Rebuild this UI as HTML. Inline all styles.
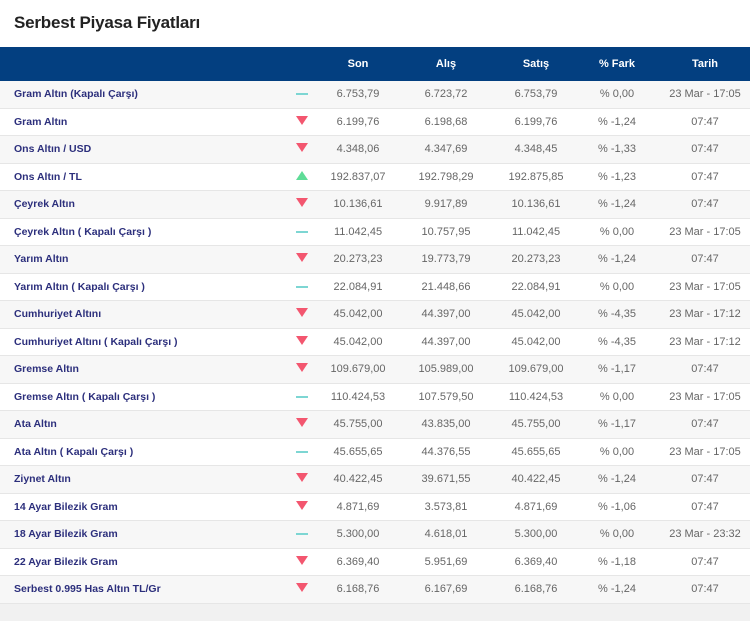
<!DOCTYPE html>
<html><head><meta charset="utf-8"><style>
body{margin:0;width:750px;height:621px;background:#f1f1f1;font-family:"Liberation Sans",sans-serif;overflow:hidden}
.top{background:#fff;height:47px;position:relative}
h1{margin:0;position:absolute;left:14px;top:13px;font-size:17px;font-weight:bold;color:#222;letter-spacing:-0.2px}
table{border-collapse:collapse;width:750px;table-layout:fixed}
th{background:#033f80;color:#fff;font-size:11px;font-weight:bold;height:34px;padding:0;text-align:center}
td{height:26.5px;padding:0;font-size:11px;color:#666;text-align:center;border-bottom:1px solid #e6e6e6;background:#fff}
tr:nth-child(even) td{background:#f7f7f7}
td.n{text-align:left;padding-left:14px;color:#2c2f7c;font-weight:bold;font-size:10.5px}
.d{display:inline-block;width:0;height:0;border-left:6px solid transparent;border-right:6px solid transparent;border-top:9px solid #f3566f}
.u{display:inline-block;width:0;height:0;border-left:6px solid transparent;border-right:6px solid transparent;border-bottom:9px solid #5fdc97}
.e{display:inline-block;width:12px;height:2px;background:#7dd6d3;vertical-align:middle}
</style></head><body>
<div class="top"><h1>Serbest Piyasa Fiyatları</h1></div>
<table>
<colgroup><col style="width:282px"><col style="width:40px"><col style="width:72px"><col style="width:104px"><col style="width:76px"><col style="width:86px"><col style="width:90px"></colgroup>
<tr><th></th><th></th><th>Son</th><th>Alış</th><th>Satış</th><th>% Fark</th><th>Tarih</th></tr>
<tr><td class="n">Gram Altın (Kapalı Çarşı)</td><td><span class="e"></span></td><td>6.753,79</td><td>6.723,72</td><td>6.753,79</td><td>% 0,00</td><td>23 Mar - 17:05</td></tr>
<tr><td class="n">Gram Altın</td><td><span class="d"></span></td><td>6.199,76</td><td>6.198,68</td><td>6.199,76</td><td>% -1,24</td><td>07:47</td></tr>
<tr><td class="n">Ons Altın / USD</td><td><span class="d"></span></td><td>4.348,06</td><td>4.347,69</td><td>4.348,45</td><td>% -1,33</td><td>07:47</td></tr>
<tr><td class="n">Ons Altın / TL</td><td><span class="u"></span></td><td>192.837,07</td><td>192.798,29</td><td>192.875,85</td><td>% -1,23</td><td>07:47</td></tr>
<tr><td class="n">Çeyrek Altın</td><td><span class="d"></span></td><td>10.136,61</td><td>9.917,89</td><td>10.136,61</td><td>% -1,24</td><td>07:47</td></tr>
<tr><td class="n">Çeyrek Altın ( Kapalı Çarşı )</td><td><span class="e"></span></td><td>11.042,45</td><td>10.757,95</td><td>11.042,45</td><td>% 0,00</td><td>23 Mar - 17:05</td></tr>
<tr><td class="n">Yarım Altın</td><td><span class="d"></span></td><td>20.273,23</td><td>19.773,79</td><td>20.273,23</td><td>% -1,24</td><td>07:47</td></tr>
<tr><td class="n">Yarım Altın ( Kapalı Çarşı )</td><td><span class="e"></span></td><td>22.084,91</td><td>21.448,66</td><td>22.084,91</td><td>% 0,00</td><td>23 Mar - 17:05</td></tr>
<tr><td class="n">Cumhuriyet Altını</td><td><span class="d"></span></td><td>45.042,00</td><td>44.397,00</td><td>45.042,00</td><td>% -4,35</td><td>23 Mar - 17:12</td></tr>
<tr><td class="n">Cumhuriyet Altını ( Kapalı Çarşı )</td><td><span class="d"></span></td><td>45.042,00</td><td>44.397,00</td><td>45.042,00</td><td>% -4,35</td><td>23 Mar - 17:12</td></tr>
<tr><td class="n">Gremse Altın</td><td><span class="d"></span></td><td>109.679,00</td><td>105.989,00</td><td>109.679,00</td><td>% -1,17</td><td>07:47</td></tr>
<tr><td class="n">Gremse Altın ( Kapalı Çarşı )</td><td><span class="e"></span></td><td>110.424,53</td><td>107.579,50</td><td>110.424,53</td><td>% 0,00</td><td>23 Mar - 17:05</td></tr>
<tr><td class="n">Ata Altın</td><td><span class="d"></span></td><td>45.755,00</td><td>43.835,00</td><td>45.755,00</td><td>% -1,17</td><td>07:47</td></tr>
<tr><td class="n">Ata Altın ( Kapalı Çarşı )</td><td><span class="e"></span></td><td>45.655,65</td><td>44.376,55</td><td>45.655,65</td><td>% 0,00</td><td>23 Mar - 17:05</td></tr>
<tr><td class="n">Ziynet Altın</td><td><span class="d"></span></td><td>40.422,45</td><td>39.671,55</td><td>40.422,45</td><td>% -1,24</td><td>07:47</td></tr>
<tr><td class="n">14 Ayar Bilezik Gram</td><td><span class="d"></span></td><td>4.871,69</td><td>3.573,81</td><td>4.871,69</td><td>% -1,06</td><td>07:47</td></tr>
<tr><td class="n">18 Ayar Bilezik Gram</td><td><span class="e"></span></td><td>5.300,00</td><td>4.618,01</td><td>5.300,00</td><td>% 0,00</td><td>23 Mar - 23:32</td></tr>
<tr><td class="n">22 Ayar Bilezik Gram</td><td><span class="d"></span></td><td>6.369,40</td><td>5.951,69</td><td>6.369,40</td><td>% -1,18</td><td>07:47</td></tr>
<tr><td class="n">Serbest 0.995 Has Altın TL/Gr</td><td><span class="d"></span></td><td>6.168,76</td><td>6.167,69</td><td>6.168,76</td><td>% -1,24</td><td>07:47</td></tr>
</table>
</body></html>
